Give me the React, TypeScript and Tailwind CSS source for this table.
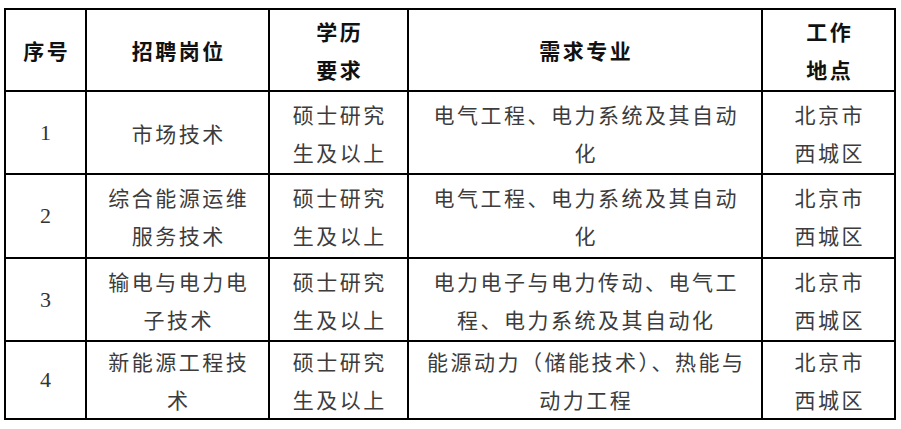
import React from "react"

const cjk = "font-['Noto_Sans_CJK_SC','Noto_Sans_CJK_JP',sans-serif]"

type Row = {
    no: string
    post: string[]
    edu: string[]
    major: string[]
    place: string[]
    h: string
}

const rows: Row[] = [
    {
        no: "1",
        post: ["市场技术"],
        edu: ["硕士研究", "生及以上"],
        major: ["电气工程、电力系统及其自动", "化"],
        place: ["北京市", "西城区"],
        h: "h-[83px]",
    },
    {
        no: "2",
        post: ["综合能源运维", "服务技术"],
        edu: ["硕士研究", "生及以上"],
        major: ["电气工程、电力系统及其自动", "化"],
        place: ["北京市", "西城区"],
        h: "h-[84px]",
    },
    {
        no: "3",
        post: ["输电与电力电", "子技术"],
        edu: ["硕士研究", "生及以上"],
        major: ["电力电子与电力传动、电气工", "程、电力系统及其自动化"],
        place: ["北京市", "西城区"],
        h: "h-[83px]",
    },
    {
        no: "4",
        post: ["新能源工程技", "术"],
        edu: ["硕士研究", "生及以上"],
        major: ["能源动力（储能技术）、热能与", "动力工程"],
        place: ["北京市", "西城区"],
        h: "h-[78px]",
    },
]

function Cell({ lines, className = "" }: { lines: string[]; className?: string }) {
    return (
        <div className={`flex flex-col items-center justify-center border-r-2 border-b-2 border-black ${className}`}>
            {lines.map((l, i) => (
                <div key={i} className="whitespace-nowrap pl-[2.5px] leading-[38px]">
                    {l}
                </div>
            ))}
        </div>
    )
}

export default function App() {
    return (
        <div className="h-[429px] w-[901px] bg-white pl-[4px] pt-[8px]">
            <div
                className={`grid w-[892px] grid-cols-[81px_183px_139px_354px_133px] border-t-2 border-l-2 border-black text-[21px] tracking-[2.5px] ${cjk}`}
            >
                {/* header */}
                <Cell lines={["序号"]} className="h-[82px] font-semibold text-[#111]" />
                <Cell lines={["招聘岗位"]} className="h-[82px] font-semibold text-[#111]" />
                <Cell lines={["学历", "要求"]} className="h-[82px] font-semibold text-[#111] leading-[37px]" />
                <Cell lines={["需求专业"]} className="h-[82px] font-semibold text-[#111]" />
                <Cell lines={["工作", "地点"]} className="h-[82px] font-semibold text-[#111]" />

                {rows.map((r) => (
                    <React.Fragment key={r.no}>
                        <Cell
                            lines={[r.no]}
                            className={`${r.h} font-['Liberation_Serif',serif] text-[22px] text-[#333]`}
                        />
                        <Cell lines={r.post} className={`${r.h} text-[#3c3c3c]`} />
                        <Cell lines={r.edu} className={`${r.h} text-[#3c3c3c]`} />
                        <Cell lines={r.major} className={`${r.h} text-[#3c3c3c]`} />
                        <Cell lines={r.place} className={`${r.h} text-[#3c3c3c]`} />
                    </React.Fragment>
                ))}
            </div>
        </div>
    )
}
